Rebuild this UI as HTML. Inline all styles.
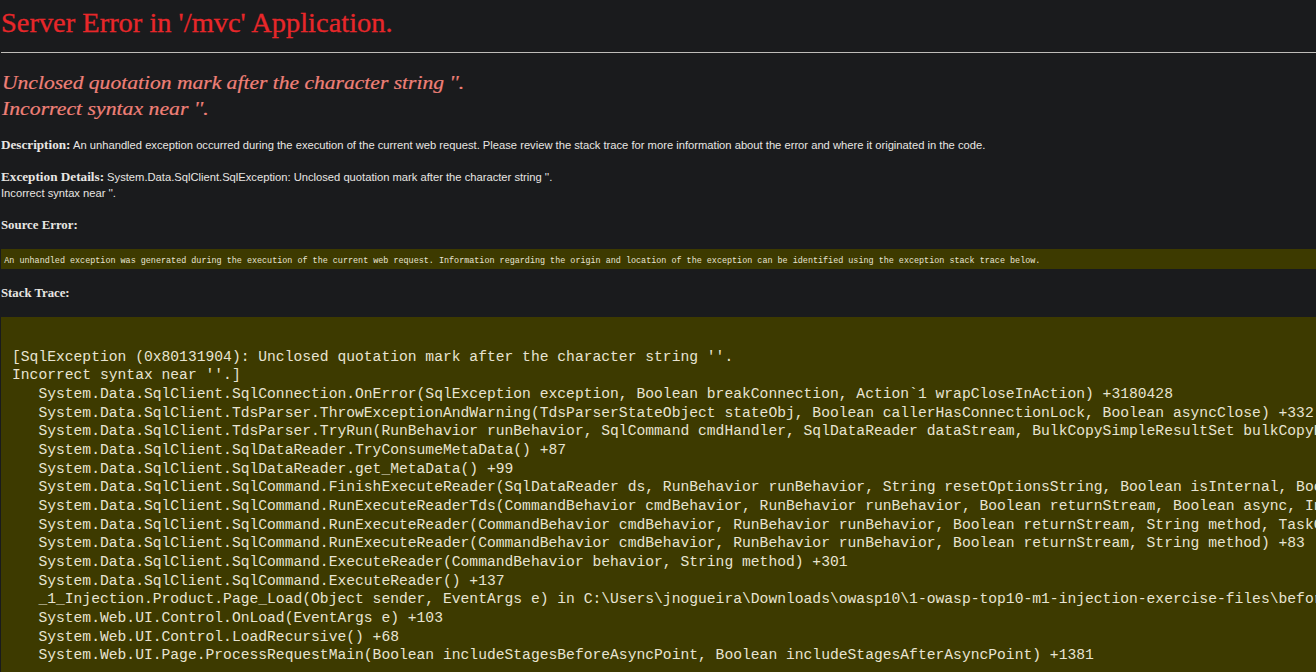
<!DOCTYPE html>
<html><head><meta charset="utf-8"><title>Server Error</title>
<style>
html,body{margin:0;padding:0;width:1316px;height:672px;overflow:hidden;background:#1a1b1d;}
body{position:relative;font-family:"Liberation Sans",sans-serif;color:#e8e6e3;}
.a{position:absolute;white-space:pre;line-height:1;}
.h1{left:0.5px;top:9.8px;font-family:"Liberation Serif",serif;font-size:27px;color:#e8272a;-webkit-text-stroke:0.3px #e8272a;transform:scaleX(1.053);transform-origin:0 0;}
.hr{position:absolute;left:1px;right:0;top:52px;height:1px;background:#bfbdb9;}
.h2{left:1px;font-family:"Liberation Serif",serif;font-style:italic;font-size:19px;color:#ef8078;-webkit-text-stroke:0.2px #ef8078;transform-origin:0 0;}
.b{font-family:"Liberation Serif",serif;font-weight:bold;font-size:12px;display:inline-block;transform-origin:0 0;}
.t{font-size:11.2px;}
.tbl{position:absolute;left:1px;right:0;background:#3d3a00;}
.code{font-family:"Liberation Mono",monospace;font-size:8.44px;color:#e8e4d2;}
.pre{font-family:"Liberation Mono",monospace;font-size:14.667px;line-height:18.667px;color:#e8e4d2;}
</style></head>
<body>
<div class="a h1">Server Error in '/mvc' Application.</div>
<div class="hr"></div>
<div class="a h2" style="top:72.8px;left:1.5px;transform:scaleX(1.135)">Unclosed quotation mark after the character string ''.</div>
<div class="a h2" style="top:98.8px;left:1.5px;transform:scaleX(1.145)">Incorrect syntax near ''.</div>

<div class="a t" style="top:139.3px;left:1px"><span class="b" style="width:69.5px;transform:scaleX(1.096)">Description:</span> An unhandled exception occurred during the execution of the current web request. Please review the stack trace for more information about the error and where it originated in the code.</div>
<div class="a t" style="top:171.2px;left:1px"><span class="b" style="width:103px;transform:scaleX(1.10)">Exception Details:</span> System.Data.SqlClient.SqlException: Unclosed quotation mark after the character string ''.</div>
<div class="a t" style="top:188.2px;left:1px">Incorrect syntax near ''.</div>
<div class="a t" style="top:219.2px;left:1px"><span class="b" style="transform:scaleX(1.067)">Source Error:</span></div>

<div class="tbl" style="top:249px;height:20px"></div>
<div class="a code" style="top:257.2px;left:4.3px">An unhandled exception was generated during the execution of the current web request. Information regarding the origin and location of the exception can be identified using the exception stack trace below.</div>

<div class="a t" style="top:287.4px;left:1px"><span class="b" style="transform:scaleX(1.063)">Stack Trace:</span></div>

<div class="tbl" style="top:317px;bottom:0"></div>
<div class="a pre" style="top:347.5px;left:12px">[SqlException (0x80131904): Unclosed quotation mark after the character string ''.
Incorrect syntax near ''.]
   System.Data.SqlClient.SqlConnection.OnError(SqlException exception, Boolean breakConnection, Action`1 wrapCloseInAction) +3180428
   System.Data.SqlClient.TdsParser.ThrowExceptionAndWarning(TdsParserStateObject stateObj, Boolean callerHasConnectionLock, Boolean asyncClose) +332
   System.Data.SqlClient.TdsParser.TryRun(RunBehavior runBehavior, SqlCommand cmdHandler, SqlDataReader dataStream, BulkCopySimpleResultSet bulkCopyHandler, TdsParserStateObject stateObj, Boolean&amp; dataReady) +4915
   System.Data.SqlClient.SqlDataReader.TryConsumeMetaData() +87
   System.Data.SqlClient.SqlDataReader.get_MetaData() +99
   System.Data.SqlClient.SqlCommand.FinishExecuteReader(SqlDataReader ds, RunBehavior runBehavior, String resetOptionsString, Boolean isInternal, Boolean forDescribeParameterEncryption) +374
   System.Data.SqlClient.SqlCommand.RunExecuteReaderTds(CommandBehavior cmdBehavior, RunBehavior runBehavior, Boolean returnStream, Boolean async, Int32 timeout, Task&amp; task, Boolean asyncWrite, Boolean inRetry, SqlDataReader ds, Boolean describeParameterEncryptionRequest) +2227
   System.Data.SqlClient.SqlCommand.RunExecuteReader(CommandBehavior cmdBehavior, RunBehavior runBehavior, Boolean returnStream, String method, TaskCompletionSource`1 completion, Int32 timeout, Task&amp; task, Boolean&amp; usedCache, Boolean asyncWrite, Boolean inRetry) +656
   System.Data.SqlClient.SqlCommand.RunExecuteReader(CommandBehavior cmdBehavior, RunBehavior runBehavior, Boolean returnStream, String method) +83
   System.Data.SqlClient.SqlCommand.ExecuteReader(CommandBehavior behavior, String method) +301
   System.Data.SqlClient.SqlCommand.ExecuteReader() +137
   _1_Injection.Product.Page_Load(Object sender, EventArgs e) in C:\Users\jnogueira\Downloads\owasp10\1-owasp-top10-m1-injection-exercise-files\before\Product.aspx.cs:25
   System.Web.UI.Control.OnLoad(EventArgs e) +103
   System.Web.UI.Control.LoadRecursive() +68
   System.Web.UI.Page.ProcessRequestMain(Boolean includeStagesBeforeAsyncPoint, Boolean includeStagesAfterAsyncPoint) +1381
</div>
</body></html>
